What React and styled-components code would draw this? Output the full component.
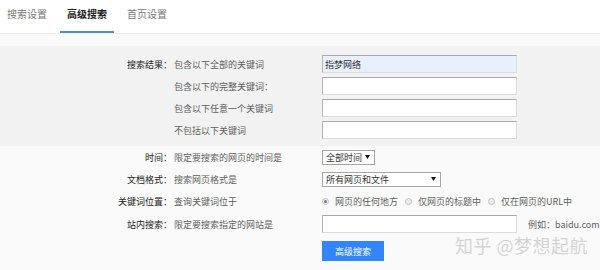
import React from "react";
import styled, { createGlobalStyle } from "styled-components";

const Global = createGlobalStyle`
  html, body { margin: 0; padding: 0; }
  body {
    background: #fafafa;
    font-family: "Noto Sans CJK SC", "Noto Sans", "Liberation Sans", sans-serif;
    font-size: 9px;
    color: #333;
  }
`;

const Page = styled.div`
  position: relative;
  width: 600px;
  height: 270px;
  overflow: hidden;
`;

const TabBar = styled.div`
  display: flex;
  gap: 6px;
  height: 33px;
  background: #fff;
  border-bottom: 1px solid #ebebeb;
`;

const Tab = styled.div`
  box-sizing: border-box;
  height: 33px;
  padding: 8px 7px 0;
  font-size: 10px;
  line-height: 12px;
  color: ${(p) => (p.$active ? "#222" : "#777")};
  font-weight: ${(p) => (p.$active ? 700 : 400)};
  border-bottom: 2px solid ${(p) => (p.$active ? "#5b8db1" : "transparent")};
`;

const Spacer = styled.div`
  height: 12px;
`;

const Panel = styled.div`
  background: #f2f2f2;
  padding: 9px 0 7px;
  display: flex;
  flex-direction: column;
  gap: 4px;
`;

const Row = styled.div`
  display: flex;
  align-items: center;
  height: ${(p) => p.$h || 18}px;
`;

const Label = styled.div`
  width: 172px;
  text-align: right;
  color: #222;
  white-space: nowrap;
`;

const Desc = styled.div`
  width: 146px;
  margin-left: 2px;
  margin-right: 2px;
  color: #5e5e5e;
  white-space: nowrap;
`;

const TextBox = styled.input`
  box-sizing: border-box;
  width: 195px;
  height: 18px;
  margin: 0;
  padding: 0 2px;
  font-family: inherit;
  font-size: 9px;
  color: #333;
  background: ${(p) => (p.$filled ? "#e8f0fe" : "#fff")};
  border: 1px solid;
  border-color: #a8a8a8 #dcdcdc #dcdcdc #b4b4b4;
  outline: none;
`;

const Lower = styled.div`
  display: flex;
  flex-direction: column;
`;

const FakeSelect = styled.div`
  box-sizing: border-box;
  width: ${(p) => p.$w}px;
  height: 15px;
  display: flex;
  align-items: center;
  justify-content: space-between;
  padding: 0 4px 0 3px;
  background: #fff;
  border: 1px solid #a6a6a6;
  color: #333;
  line-height: 13px;
`;

const RadioGroup = styled.div`
  display: flex;
  align-items: center;
  color: #5e5e5e;
`;

const RadioItem = styled.label`
  display: flex;
  align-items: center;
  gap: 6px;
  margin-right: 7px;
  white-space: nowrap;
`;

const RadioDot = styled.span`
  box-sizing: border-box;
  width: 7px;
  height: 7px;
  border-radius: 50%;
  border: 1px solid #c4c4c4;
  background: #ececec;
  display: flex;
  align-items: center;
  justify-content: center;
  &::after {
    content: "";
    width: 3px;
    height: 3px;
    border-radius: 50%;
    background: ${(p) => (p.$checked ? "#777" : "transparent")};
  }
`;

const Example = styled.span`
  margin-left: 11px;
  color: #5e5e5e;
`;

const ButtonRow = styled.div`
  padding: 5px 0 0 322px;
`;

const Button = styled.button`
  width: 62px;
  height: 20px;
  border: none;
  margin: 0;
  padding: 0;
  background: #3385ff;
  color: #fff;
  font-family: inherit;
  font-size: 9px;
`;

const Watermark = styled.div`
  position: absolute;
  left: 455px;
  top: 232px;
  font-size: 18px;
  letter-spacing: 0.5px;
  color: rgba(185, 185, 185, 0.6);
  white-space: nowrap;
  pointer-events: none;
`;

const Caret = () => (
  <svg width="5" height="4" viewBox="0 0 5 4">
    <path d="M0 0 H5 L2.5 4 Z" fill="#111" />
  </svg>
);

export default function App() {
  return (
    <Page>
      <Global />
      <TabBar>
        <Tab>搜索设置</Tab>
        <Tab $active>高级搜索</Tab>
        <Tab>首页设置</Tab>
      </TabBar>
      <Spacer />
      <Panel>
        <Row>
          <Label>搜索结果：</Label>
          <Desc>包含以下全部的关键词</Desc>
          <TextBox $filled readOnly value="指梦网络" />
        </Row>
        <Row>
          <Label />
          <Desc>包含以下的完整关键词：</Desc>
          <TextBox readOnly value="" />
        </Row>
        <Row>
          <Label />
          <Desc>包含以下任意一个关键词</Desc>
          <TextBox readOnly value="" />
        </Row>
        <Row>
          <Label />
          <Desc>不包括以下关键词</Desc>
          <TextBox readOnly value="" />
        </Row>
      </Panel>
      <Lower>
        <Row $h={22}>
          <Label>时间：</Label>
          <Desc>限定要搜索的网页的时间是</Desc>
          <FakeSelect $w={53}>
            全部时间
            <Caret />
          </FakeSelect>
        </Row>
        <Row $h={22}>
          <Label>文档格式：</Label>
          <Desc>搜索网页格式是</Desc>
          <FakeSelect $w={119}>
            所有网页和文件
            <Caret />
          </FakeSelect>
        </Row>
        <Row $h={22}>
          <Label>关键词位置：</Label>
          <Desc>查询关键词位于</Desc>
          <RadioGroup>
            <RadioItem>
              <RadioDot $checked />
              网页的任何地方
            </RadioItem>
            <RadioItem>
              <RadioDot />
              仅网页的标题中
            </RadioItem>
            <RadioItem>
              <RadioDot />
              仅在网页的URL中
            </RadioItem>
          </RadioGroup>
        </Row>
        <Row $h={24}>
          <Label>站内搜索：</Label>
          <Desc>限定要搜索指定的网站是</Desc>
          <TextBox readOnly value="" />
          <Example>例如：baidu.com</Example>
        </Row>
        <ButtonRow>
          <Button>高级搜索</Button>
        </ButtonRow>
      </Lower>
      <Watermark>知乎 @梦想起航</Watermark>
    </Page>
  );
}
